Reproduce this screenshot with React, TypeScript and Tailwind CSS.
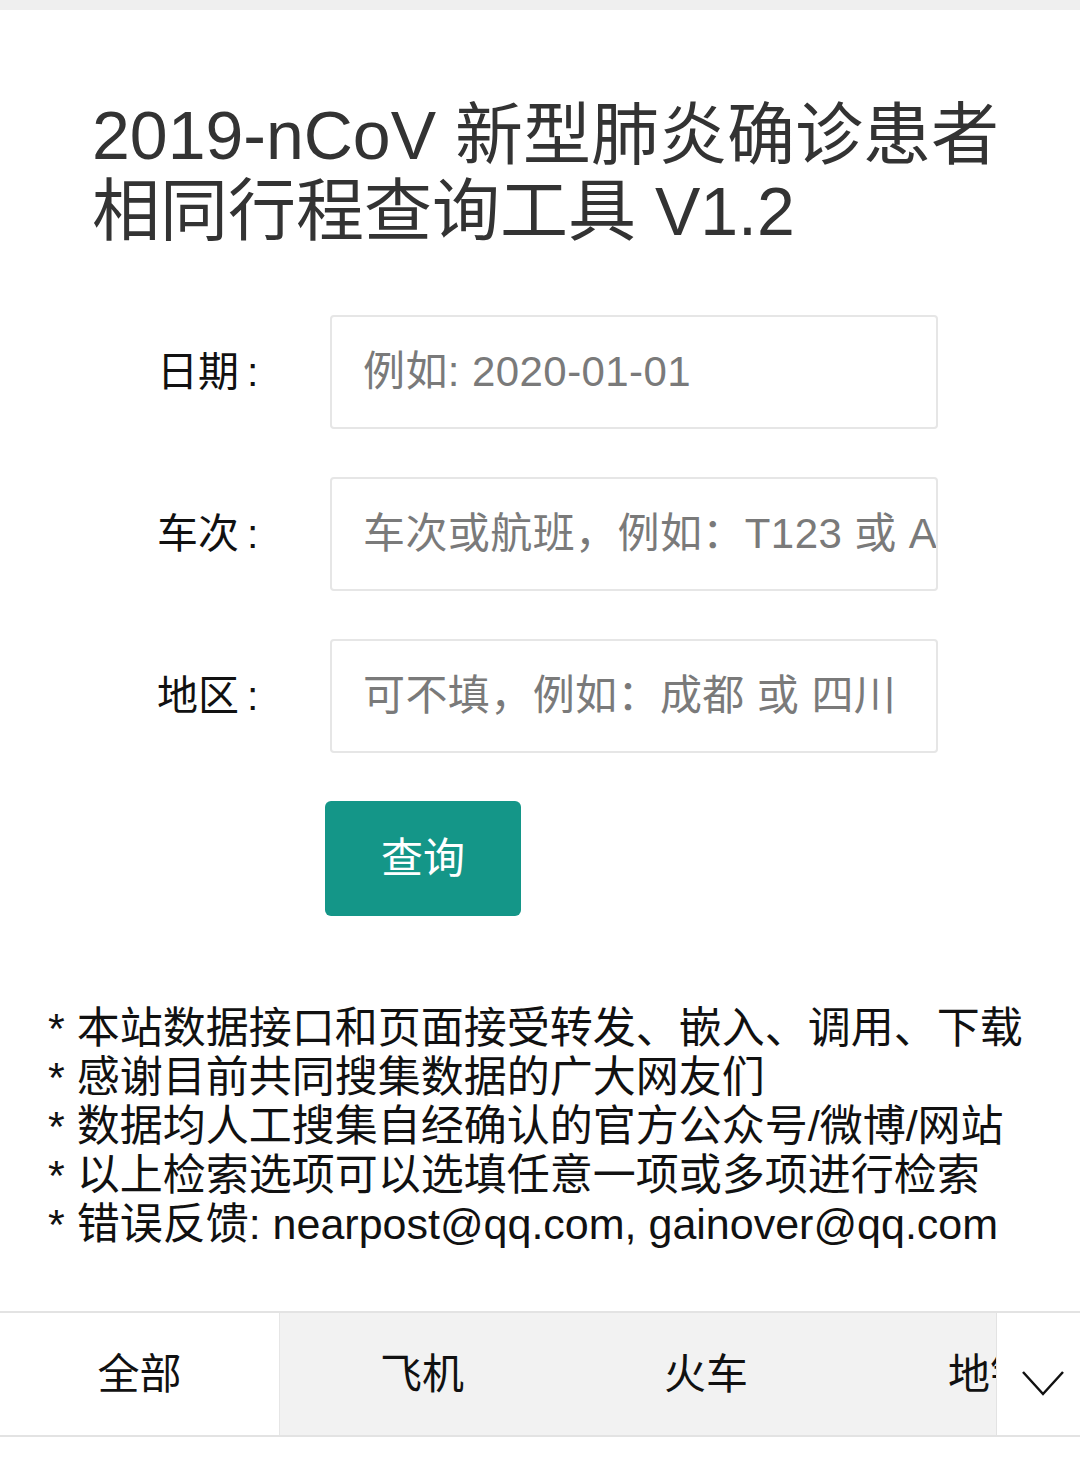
import { useState } from "react";

const fields = [
  { label: "日期", placeholder: "例如: 2020-01-01" },
  { label: "车次", placeholder: "车次或航班，例如：T123 或 AB123" },
  { label: "地区", placeholder: "可不填，例如：成都 或 四川" },
];

const notes = [
  "本站数据接口和页面接受转发、嵌入、调用、下载",
  "感谢目前共同搜集数据的广大网友们",
  "数据均人工搜集自经确认的官方公众号/微博/网站",
  "以上检索选项可以选填任意一项或多项进行检索",
  "错误反馈: nearpost@qq.com, gainover@qq.com",
];

const tabs = ["全部", "飞机", "火车", "地铁", "汽车"];

export default function App() {
  const [active, setActive] = useState(0);

  return (
    <div className="min-h-[1472px] bg-white text-[#111] font-['Liberation_Sans','Noto_Sans_CJK_SC',sans-serif]">
      <div className="h-[10px] bg-[#efefef]" />

      {/* Title */}
      <h1 className="pl-[92px] pt-[87px] text-[68px] leading-[76px] font-normal text-[#333] whitespace-nowrap">
        2019-nCoV 新型肺炎确诊患者
        <br />
        相同行程查询工具 V1.2
      </h1>

      {/* Form */}
      <div className="mt-[66px] flex flex-col gap-[48px]">
        {fields.map((f) => (
          <div key={f.label} className="flex items-center">
            <label className="w-[330px] pl-[157px] text-[41px] leading-none">
              {f.label}
              <span className="ml-[8px]">:</span>
            </label>
            <input
              className="h-[114px] w-[608px] rounded-[4px] border-2 border-[#e6e6e6] pl-[31px] pr-0 text-[42px] tracking-[0.01em] outline-none placeholder:text-[#7a7a7a]"
              placeholder={f.placeholder}
            />
          </div>
        ))}
        <div className="pl-[325px]">
          <button className="h-[115px] w-[196px] rounded-[6px] bg-[#149688] text-[42px] text-white">
            查询
          </button>
        </div>
      </div>

      {/* Notes */}
      <ul className="mt-[88px] pl-[48px] text-[43px] leading-[49px] whitespace-nowrap">
        {notes.map((n) => (
          <li key={n}>* {n}</li>
        ))}
      </ul>

      {/* Tabs */}
      <div className="mt-[62px] flex h-[126px] border-y-2 border-[#e3e3e3]">
        <div className="flex flex-1 overflow-hidden bg-[#f2f2f2]">
          {tabs.map((t, i) => (
            <button
              key={t}
              onClick={() => setActive(i)}
              className={
                (i === 0 ? "w-[280px] " : "w-[284px] ") +
                "shrink-0 text-[42px] " +
                (active === i ? "bg-white border-r border-[#e6e6e6]" : "bg-[#f2f2f2]")
              }
            >
              {t}
            </button>
          ))}
        </div>
        <div className="flex w-[84px] items-center justify-center border-l border-[#e3e3e3] bg-white pt-[18px] pl-[8px]">
          <svg width="44" height="26" viewBox="0 0 44 26" fill="none" stroke="#111" strokeWidth="2.5">
            <path d="M2 2 L22 24 L42 2" />
          </svg>
        </div>
      </div>
    </div>
  );
}
